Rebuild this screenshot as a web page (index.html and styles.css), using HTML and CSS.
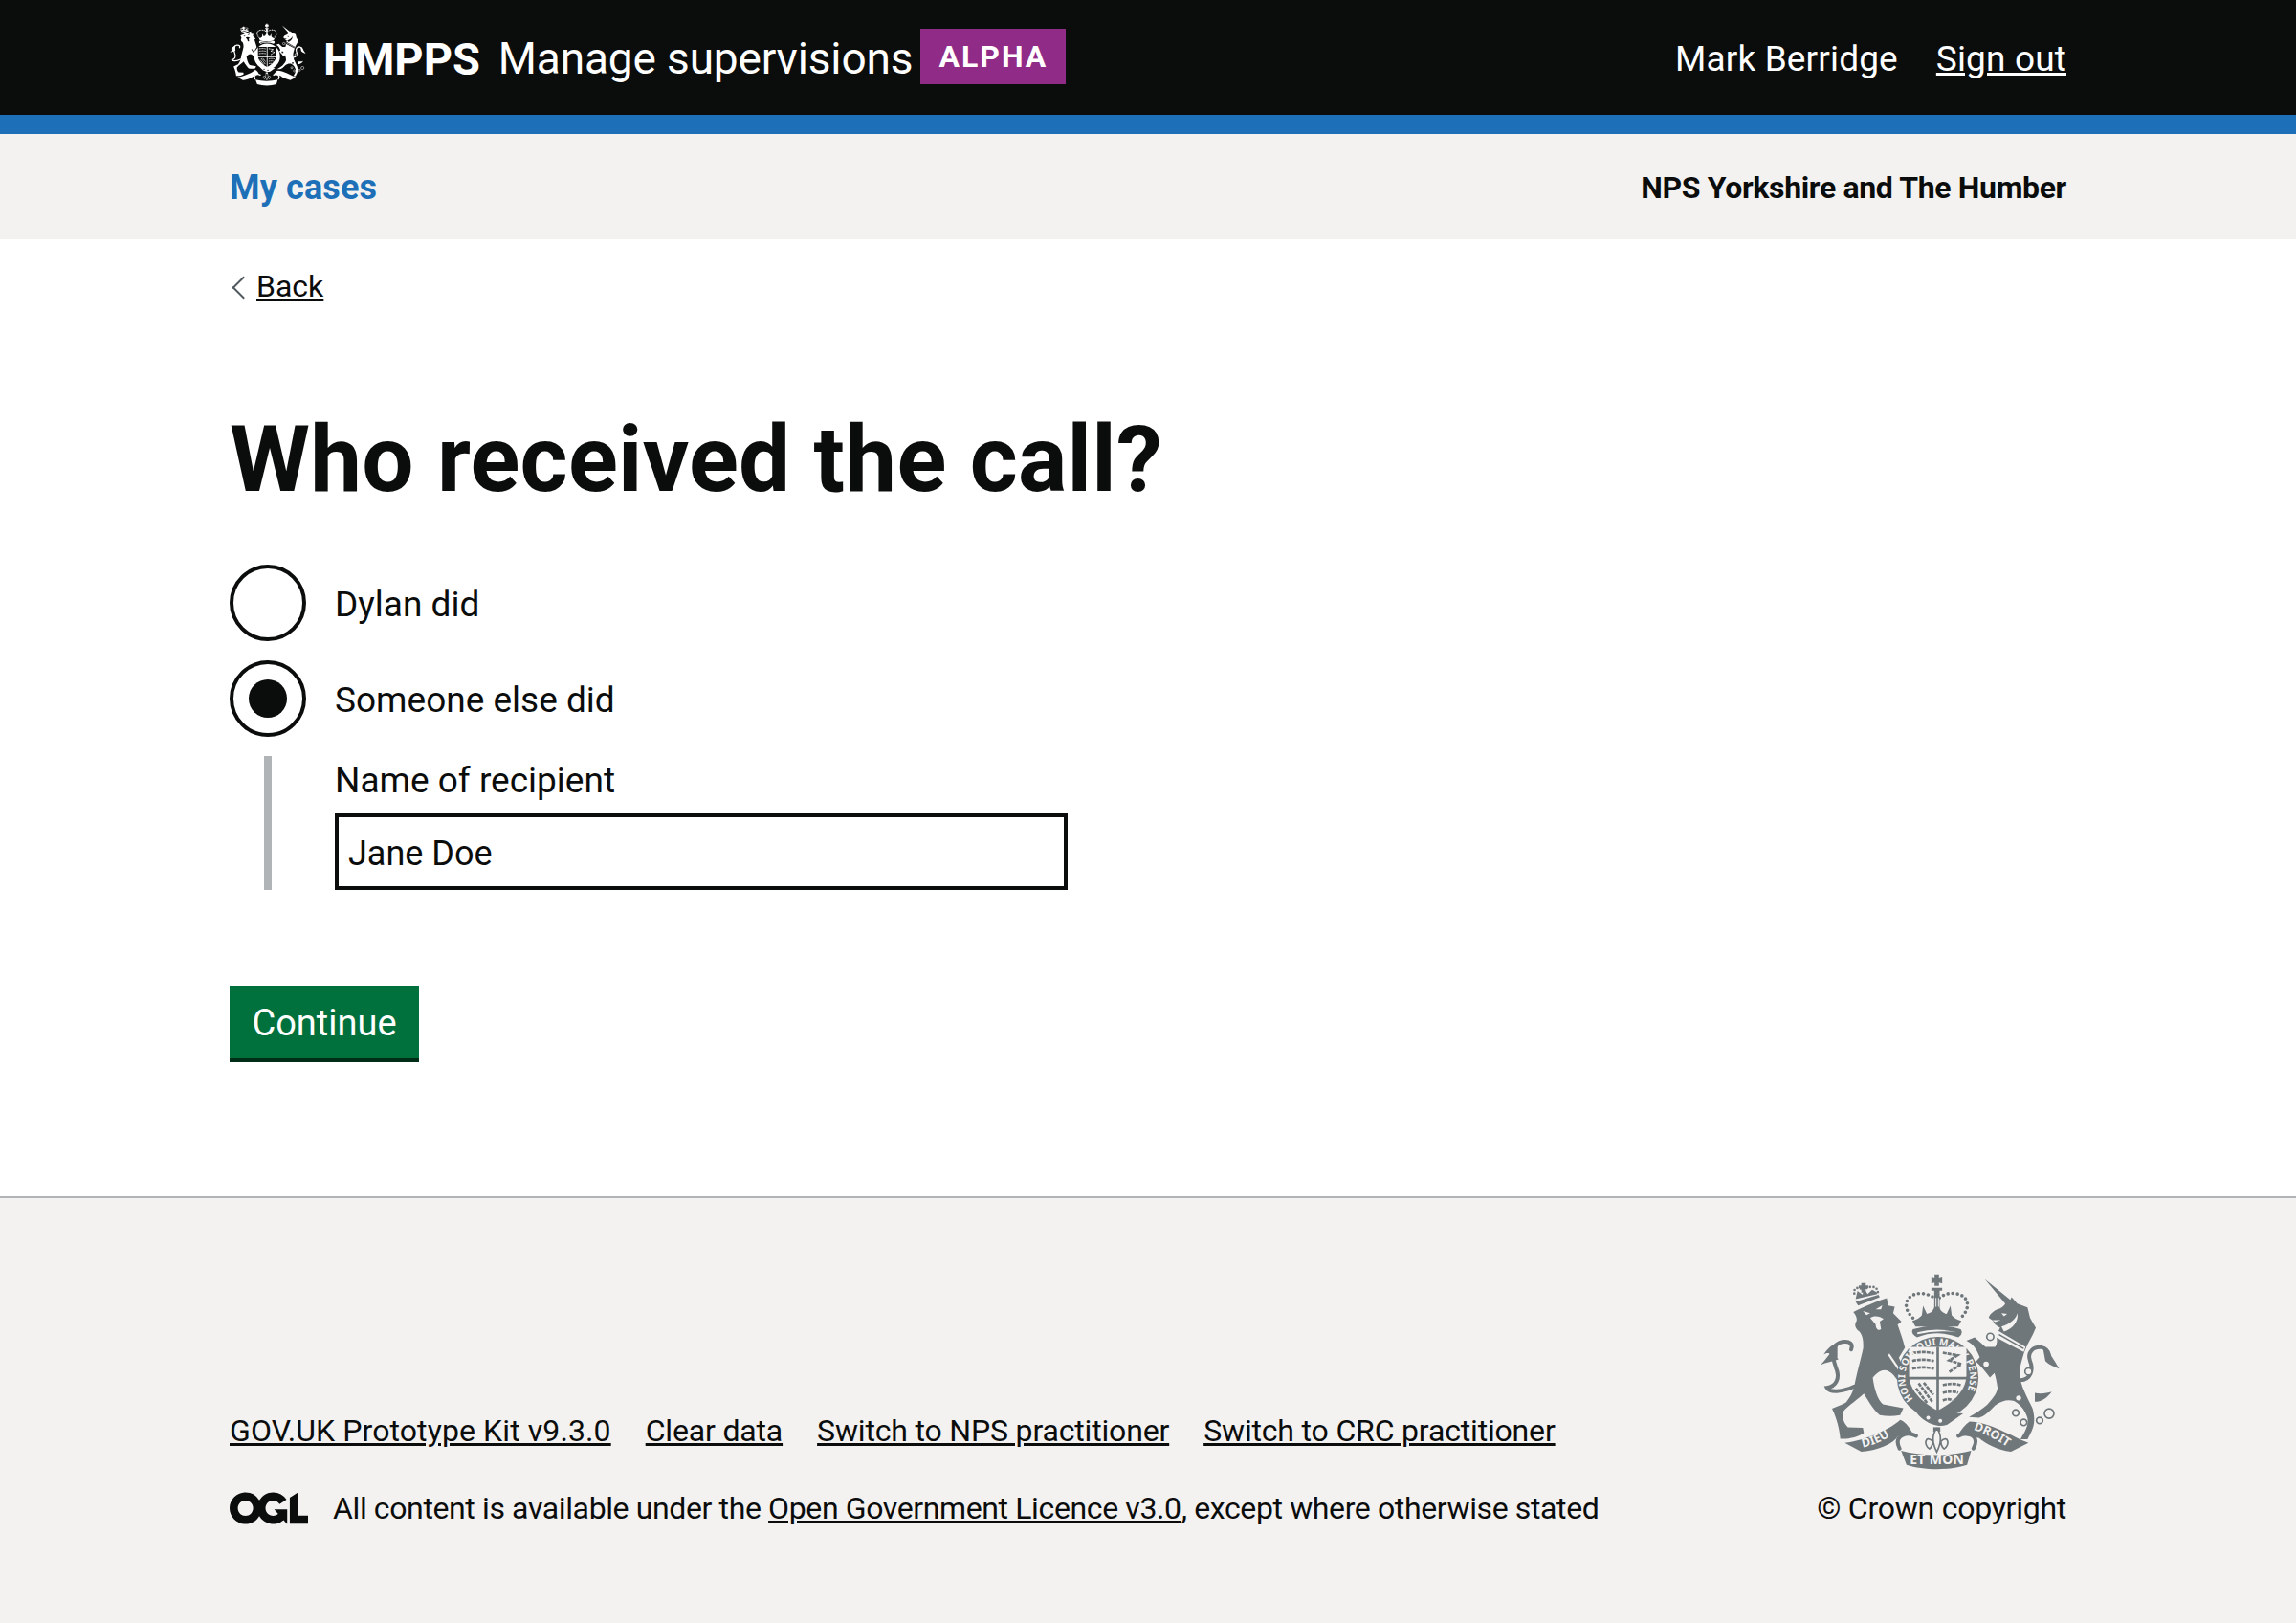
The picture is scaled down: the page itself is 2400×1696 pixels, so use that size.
FILE: index.html
```html
<!DOCTYPE html>
<html lang="en">
<head>
  <meta charset="UTF-8" />
  <title>Who received the call? | Manage supervisions</title>
  <link rel="stylesheet" href="styles.css">
</head>
<body>
  <svg class="sprite" aria-hidden="true">
    <defs>
    <g id="crest">
      <!-- crown -->
      <path d="M430 68h14v10l10-3v22l-10-3v10h-14v-10l-10 3V75l10 3z"/>
      <path d="M420 110h34v9h-34zM429 118h17v62h-17z"/>
      <path class="crest-line dots" d="M362 205C326 172 338 130 385 128C410 128 430 140 437 150C445 140 465 125 490 128C537 130 548 172 512 205"/>
      <path d="M360 214q20-5 30-17l4-30 12 25q18-2 24-22l7-25 7 25q6 20 24 22l12-25 4 30q10 12 30 17l-10 18H370z"/>
      <path class="crest-cut" d="M433 142h3v28h-3zM441 142h3v28h-3z"/>
      <path d="M362 240Q437 218 512 240Q522 254 505 266Q437 240 375 266Q353 254 362 240z"/>
      <path class="crest-cut" d="M376 250Q437 234 500 250Q437 242 376 256z"/>
      <!-- lion -->
      <path d="M175 186C205 172 250 152 280 143L284 166L305 170L300 190L326 216L314 226C322 250 330 270 337 298L318 330L346 396C345 410 340 420 332 426C320 410 305 385 292 376C275 362 255 368 236 392C240 425 250 460 268 476L332 488L322 510C300 514 280 514 258 510C240 495 225 470 208 442C190 460 160 478 142 500C140 520 145 535 158 548L205 550L208 566C190 578 160 586 134 584C132 560 125 525 108 490C125 482 140 478 152 470C165 455 172 440 178 420C185 380 200 330 206 300C208 270 200 250 190 245C180 235 178 225 185 215C188 205 182 195 175 186z"/>
      <path class="crest-line" d="M178 420C140 438 100 440 92 424C120 420 135 395 120 360C105 320 110 285 140 280C165 276 175 288 168 304"/>
      <path d="M110 305C95 325 85 340 72 352C90 345 110 342 128 335zM125 282C105 290 90 305 82 320C100 310 105 318 100 335L125 330z"/>
      <path class="crest-cut" d="M205 183L228 190L216 196zM245 178L266 165L262 178zM228 205C240 195 260 200 270 208L258 216L262 240C255 246 245 240 245 225z"/>
      <path class="crest-cut" d="M288 316L342 396L336 398L284 322z"/>
      <!-- coronet on the lion -->
      <path d="M200 95h14v8h8v8h-8v14h-14v-14h-8v-8h8z"/>
      <path class="crest-line dots small" d="M178 128C175 110 190 105 207 118C220 105 250 100 252 125"/>
      <path d="M182 146L188 120L204 132L208 112L220 130L234 116L248 124L250 130z"/>
      <path d="M182 154L254 132L258 140L190 166z"/>
      <!-- unicorn -->
      <path d="M588 83L668 148L672 140C680 148 685 155 690 160L722 172L730 205L748 236L738 258L722 288L712 312C705 335 695 365 698 392C705 430 730 470 738 490C746 520 745 545 730 570L722 586L700 586C712 565 726 545 722 520C715 495 700 478 680 466C660 460 640 465 620 480C600 500 585 515 570 518L538 516C560 505 580 490 595 478C610 460 625 445 628 425C625 405 622 390 618 378L604 392C590 375 575 355 560 342L572 328C565 310 555 290 540 282L530 276L556 266L590 296L620 296C628 285 628 270 622 262L636 236C625 230 615 222 614 214L600 204C605 190 620 180 634 176C645 170 650 165 652 160z"/>
      <path class="crest-line" d="M700 400C730 400 742 370 730 340C720 312 740 295 765 297C780 300 788 310 790 322"/>
      <path d="M770 297C790 305 805 340 822 364C805 358 790 352 778 340zM745 440C765 445 785 440 798 436C785 455 765 468 745 468z"/>
      <path class="crest-cut" d="M640 190l18 2-10 8zM612 212l26 0-18 6zM640 232C665 225 685 210 690 190C695 215 675 240 648 248zM628 244L716 296L710 312L620 264z"/>
      <path class="crest-line thin" d="M634 258L708 300"/>
      <path class="crest-chain" d="M605 264m-11 0a11 11 0 1 0 22 0a11 11 0 1 0 -22 0M592 350m-11 0a11 11 0 1 0 22 0a11 11 0 1 0 -22 0M725 373m-11 0a11 11 0 1 0 22 0a11 11 0 1 0 -22 0M685 503m-10 0a10 10 0 1 0 20 0a10 10 0 1 0 -20 0M710 533m-10 0a10 10 0 1 0 20 0a10 10 0 1 0 -20 0M760 527m-10 0a10 10 0 1 0 20 0a10 10 0 1 0 -20 0M790 505m-15 0a15 15 0 1 0 30 0a15 15 0 1 0 -30 0"/>
      <circle class="crest-cut" cx="694" cy="456" r="8"/>
      <circle class="crest-cut" cx="716" cy="420" r="8"/>
      <!-- garter and shield -->
      <circle cx="440" cy="392" r="128"/>
      <path d="M366 488C378 520 430 555 470 540L520 505L440 500z"/>
      <path class="crest-cut" d="M350 296H530V385C530 430 490 470 440 496C390 470 350 430 350 385z"/>
      <path d="M436 296h8v200h-8zM346 390h188v8H346z"/>
      <g class="crest-quarter">
        <path d="M360 316q34-8 68 0M360 340q34-8 68 0M360 364q34-8 68 0"/>
        <path d="M456 314l46 8-26 16 38 12-40 26"/>
        <path d="M380 410l44 60M396 408l30 38M372 426l36 48"/>
        <path d="M456 416q30-8 56 0M456 440q30-8 48 0M456 464q20-8 30 0"/>
      </g>
      <circle class="crest-cut" cx="410" cy="518" r="6"/>
      <circle class="crest-cut" cx="448" cy="528" r="6"/>
      <!-- fleur and motto scrolls -->
      <path d="M426 548h22v14h-22z"/>
      <path class="crest-fleur" d="M437 552C418 575 424 600 437 626C450 600 456 575 437 552zM424 592C400 570 395 605 414 616C420 612 424 604 424 592zM450 592C474 570 479 605 460 616C454 612 450 604 450 592z"/>
      <path d="M148 597C210 590 290 555 322 525C336 530 350 545 360 566L315 576C300 600 255 620 200 625z"/>
      <path d="M540 530C600 530 680 580 725 597L670 625C630 620 590 600 570 582L505 570C515 555 525 540 540 530z"/>
      <path d="M325 622C390 640 480 640 545 622L532 666C480 684 395 684 342 666z"/>
      <path class="crest-line" d="M372 575C340 560 300 575 320 615M505 575C535 560 575 575 552 615"/>
    </g>
    </defs>
  </svg>

  <header class="site-header">
    <div class="wrap header-row">
      <div class="brand">
        <svg class="brand-crest" viewBox="70 60 755 625" aria-hidden="true"><use href="#crest"/></svg>
        <span class="brand-org">HMPPS</span>
        <span class="brand-service">Manage supervisions</span>
        <strong class="phase-tag">ALPHA</strong>
      </div>
      <div class="account">
        <span>Mark Berridge</span>
        <a href="#">Sign out</a>
      </div>
    </div>
  </header>

  <nav class="sub-nav">
    <div class="wrap sub-nav-row">
      <a href="#" class="sub-nav-link">My cases</a>
      <span class="sub-nav-org">NPS Yorkshire and The Humber</span>
    </div>
  </nav>

  <main class="wrap page">
    <a href="#" class="back-link">Back</a>
    <h1>Who received the call?</h1>
    <form>
      <label class="radio">
        <input type="radio" name="recipient" />
        <span class="radio-label">Dylan did</span>
      </label>
      <label class="radio">
        <input type="radio" name="recipient" checked />
        <span class="radio-label">Someone else did</span>
      </label>
      <div class="conditional">
        <label class="field-label" for="recipient-name">Name of recipient</label>
        <input class="text-input" id="recipient-name" type="text" value="Jane Doe" />
      </div>
      <button type="button" class="button">Continue</button>
    </form>
  </main>

  <footer class="site-footer">
    <div class="wrap footer-row">
      <div class="footer-meta">
        <ul class="footer-links">
          <li><a href="#">GOV.UK Prototype Kit v9.3.0</a></li>
          <li><a href="#">Clear data</a></li>
          <li><a href="#">Switch to NPS practitioner</a></li>
          <li><a href="#">Switch to CRC practitioner</a></li>
        </ul>
        <div class="licence">
          <svg class="ogl" viewBox="0 0 483.2 195.7" aria-hidden="true"><path fill="currentColor" d="M421.5 142.8V.1l-50.7 32.3v161.1h112.4v-50.7zm-122.3-9.6A47.12 47.12 0 0 1 221 97.8c0-26 21.1-47.1 47.1-47.1 16.7 0 31.4 8.7 39.7 21.8l42.7-27.2A97.63 97.63 0 0 0 268.1 0c-36.5 0-68.3 20.1-85.1 49.7A98 98 0 0 0 97.8 0C43.9 0 0 43.9 0 97.8s43.9 97.8 97.8 97.8c36.5 0 68.3-20.1 85.1-49.7a97.76 97.76 0 0 0 149.6 25.4l19.4 22.2h3v-87.8h-80l24.3 27.5zM97.8 145c-26 0-47.1-21.1-47.1-47.1s21.1-47.1 47.1-47.1 47.2 21 47.2 47S123.8 145 97.8 145"/></svg>
          <span>All content is available under the <a href="#">Open Government Licence v3.0</a>, except where otherwise stated</span>
        </div>
      </div>
      <div class="copyright">
        <svg class="footer-crest" viewBox="70 60 755 625" aria-hidden="true">
          <use href="#crest"/>
          <path id="garter-path" class="crest-none" d="M363 460A102 102 0 1 1 493 479"/>
          <path id="dieu-path" class="crest-none" d="M205 612C250 602 285 582 320 556"/>
          <path id="droit-path" class="crest-none" d="M552 556C590 568 630 590 668 616"/>
          <text class="crest-text garter-text"><textPath href="#garter-path">HONI SOIT QUI MAL Y PENSE</textPath></text>
          <text class="crest-text motto-text"><textPath href="#dieu-path">DIEU</textPath></text>
          <text class="crest-text motto-text"><textPath href="#droit-path">DROIT</textPath></text>
          <text class="crest-text motto-text motto-centre" x="352" y="665">ET MON</text>
        </svg>
        <a href="#">© Crown copyright</a>
      </div>
    </div>
  </footer>
</body>
</html>
```

FILE: styles.css
```css
* {
  box-sizing: border-box;
}
body {
  margin: 0;
  font-family: Roboto, Arial, sans-serif;
  color: #0b0c0c;
  background-color: #ffffff;
}
a {
  color: inherit;
}
.sprite {
  position: absolute;
  width: 0;
  height: 0;
}
.wrap {
  width: 1920px;
  margin: 0 auto;
}

/* header */
.site-header {
  height: 140px;
  background-color: #0b0c0c;
  border-bottom: 20px solid #1d70b8;
  color: #ffffff;
}
.header-row {
  height: 120px;
  display: flex;
  justify-content: space-between;
  align-items: center;
}
.brand {
  display: flex;
  align-items: center;
}
.brand-crest {
  width: 80px;
  height: 66px;
  margin-right: 18px;
  margin-top: -6px;
  color: #ffffff;
  fill: currentColor;
  --crest-bg: #0b0c0c;
}
.brand-org {
  padding-top: 2px;
  font-size: 47px;
  font-weight: 700;
  margin-right: 19px;
}
.brand-service {
  padding-top: 2px;
  font-size: 46px;
  letter-spacing: -0.15px;
  margin-right: 8px;
}
.phase-tag {
  width: 152px;
  height: 58px;
  margin-top: -2px;
  display: flex;
  align-items: center;
  justify-content: center;
  background-color: #912b88;
  font-size: 32px;
  letter-spacing: 2px;
}
.account {
  display: flex;
  gap: 40px;
  padding-top: 2px;
  font-size: 37px;
  letter-spacing: 0.15px;
}

/* nav strip */
.sub-nav {
  height: 110px;
  background-color: #f3f2f1;
}
.sub-nav-row {
  height: 100%;
  padding-top: 2px;
  display: flex;
  justify-content: space-between;
  align-items: center;
}
.sub-nav-link {
  color: #1d70b8;
  font-size: 36px;
  font-weight: 700;
  letter-spacing: 0.15px;
  text-decoration: none;
}
.sub-nav-org {
  font-size: 32px;
  font-weight: 700;
  letter-spacing: -0.35px;
}

/* main */
.page {
  height: 1000px;
  padding-top: 30px;
}
.back-link {
  display: inline-block;
  position: relative;
  padding-left: 28px;
  font-size: 32px;
  line-height: 38px;
}
.back-link::before {
  content: "";
  position: absolute;
  left: 6px;
  top: 12px;
  width: 15px;
  height: 15px;
  border-left: 2px solid #505a5f;
  border-bottom: 2px solid #505a5f;
  transform: rotate(45deg);
}
h1 {
  margin: 112px 0 60px;
  font-size: 96px;
  line-height: 100px;
  font-weight: 700;
  letter-spacing: 0.28px;
}
.radio {
  display: flex;
  align-items: center;
  position: relative;
  height: 80px;
  margin-bottom: 20px;
}
.radio input {
  appearance: none;
  flex: none;
  width: 80px;
  height: 80px;
  margin: 0 30px 0 0;
  border: 4px solid #0b0c0c;
  border-radius: 50%;
  background-color: #ffffff;
}
.radio input:checked + .radio-label::before {
  content: "";
  position: absolute;
  left: 20px;
  top: 20px;
  width: 40px;
  height: 40px;
  border-radius: 50%;
  background-color: #0b0c0c;
}
.radio-label,
.field-label {
  font-size: 37px;
}
.radio-label {
  padding-top: 2px;
}
.conditional {
  margin-left: 36px;
  padding-left: 66px;
  border-left: 8px solid #b1b4b6;
}
.field-label {
  display: block;
  height: 60px;
  line-height: 52px;
}
.text-input {
  display: block;
  width: 766px;
  height: 80px;
  padding: 3px 10px 0;
  border: 4px solid #0b0c0c;
  border-radius: 0;
  font-family: inherit;
  font-size: 36px;
  color: #0b0c0c;
}
.button {
  display: block;
  width: 198px;
  height: 80px;
  margin-top: 100px;
  padding: 2px 0 0;
  border: none;
  border-bottom: 4px solid #002d18;
  border-radius: 0;
  background-color: #00703c;
  color: #ffffff;
  font-family: inherit;
  font-size: 38px;
}

/* footer */
.site-footer {
  height: 446px;
  padding-top: 77px;
  background-color: #f3f2f1;
  border-top: 2px solid #b1b4b6;
  font-size: 32px;
}
.footer-row {
  display: flex;
  justify-content: space-between;
}
.footer-meta {
  display: flex;
  flex-direction: column;
  justify-content: flex-end;
}
.footer-links {
  display: flex;
  gap: 36px;
  margin: 0 0 40px;
  padding: 0;
  list-style: none;
  letter-spacing: -0.17px;
}
.footer-links li:first-child {
  letter-spacing: 0.1px;
}
.licence {
  display: flex;
  align-items: center;
  gap: 26px;
  height: 44px;
  letter-spacing: -0.38px;
}
.ogl {
  width: 82px;
  height: 34px;
}
.copyright {
  display: flex;
  flex-direction: column;
  align-items: flex-end;
  gap: 17px;
  letter-spacing: -0.25px;
}
.copyright a {
  text-decoration: none;
  line-height: 44px;
}
.footer-crest {
  width: 252px;
  height: 208px;
  margin-right: 6px;
  color: #6f777b;
  fill: currentColor;
  --crest-bg: #f3f2f1;
}

/* crest parts */
.crest-line {
  fill: none;
  stroke: currentColor;
  stroke-width: 12;
  stroke-linecap: round;
}
.crest-line.thin {
  stroke-width: 5;
}
.crest-line.dots {
  stroke-width: 11;
  stroke-dasharray: 0 15;
}
.crest-line.dots.small {
  stroke-width: 8;
  stroke-dasharray: 0 11;
}
.crest-cut {
  fill: var(--crest-bg);
}
.crest-none {
  fill: none;
}
.crest-chain,
.crest-fleur {
  fill: var(--crest-bg);
  stroke: currentColor;
  stroke-width: 5;
}
.crest-quarter {
  fill: none;
  stroke: currentColor;
  stroke-width: 8;
  stroke-dasharray: 12 3;
}
.crest-text {
  fill: var(--crest-bg);
  font-family: "Noto Sans", sans-serif;
  font-weight: 700;
  letter-spacing: 0;
}
.garter-text {
  font-size: 30px;
  letter-spacing: 0.3px;
}
.motto-text {
  font-size: 38px;
}
.motto-centre {
  font-size: 42px;
  letter-spacing: 1px;
}
```
